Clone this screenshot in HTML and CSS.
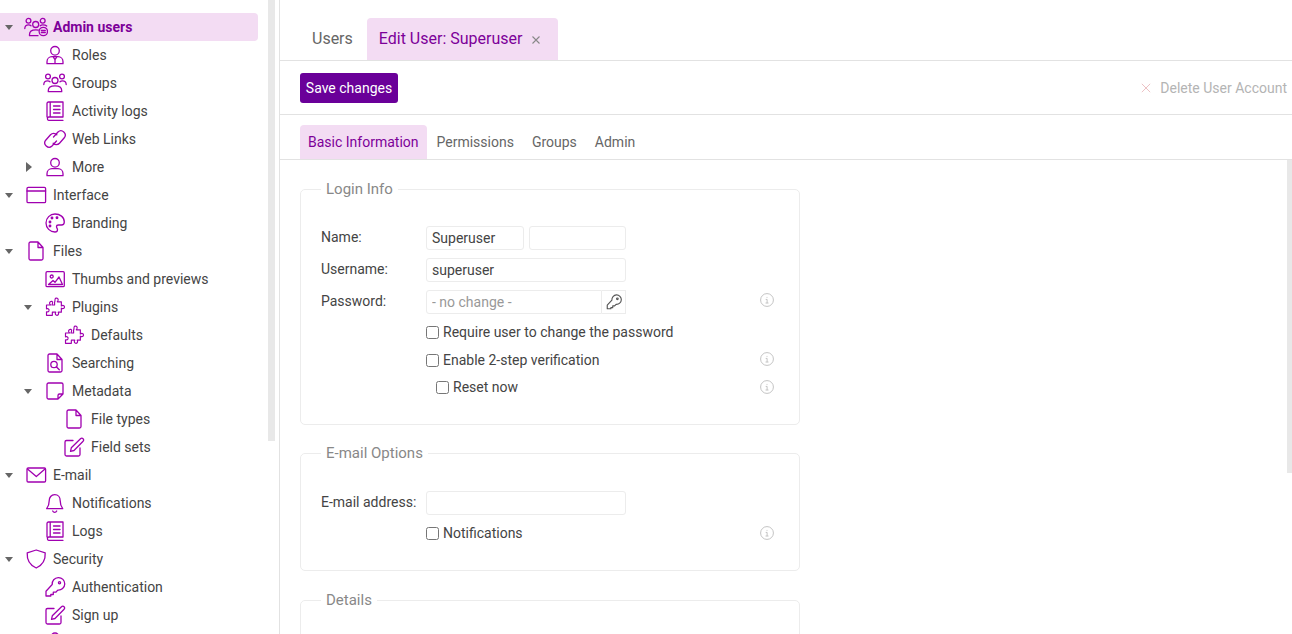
FILE: index.html
```html
<!DOCTYPE html>
<html lang="en">
<head>
<meta charset="utf-8">
<title>Edit User: Superuser</title>
<link rel="stylesheet" href="styles.css">
</head>
<body>
<svg class="defs" width="0" height="0" aria-hidden="true">
  <symbol id="i-admin" viewBox="0 0 24 24"><circle cx="4.500" cy="5.800" r="2.400"/><circle cx="18.700" cy="5.800" r="2.400"/><circle cx="11.700" cy="9.500" r="3"/><path d="M.8 13.500c0-2.300 1.500-3.700 3.700-3.700 1 0 1.900.3 2.500.9M22.700 11c-.7-.8-2.100-1.200-4-1.200-1 0-1.900.3-2.500.9M5.500 20.700v-1.200c0-2.800 2.500-4.700 6.300-4.700 1 0 1.700.1 2.500.3M5.500 20.700h8.500"/><circle cx="19.300" cy="16.500" r="4.200"/><path d="M17.300 15.500h4M17.300 17.500h4"/></symbol>
  <symbol id="i-role" viewBox="0 0 24 24"><circle cx="12" cy="7.800" r="4.300"/><path d="M4 20.700v-2c0-2.800 2.200-5 5-5h6c2.800 0 5 2.200 5 5v2zM12 20.700v-4M10 13.700l2 3 2-3"/></symbol>
  <symbol id="i-group" viewBox="0 0 24 24"><circle cx="5" cy="5.500" r="2.400"/><circle cx="19" cy="5.500" r="2.400"/><circle cx="12" cy="9.500" r="3"/><path d="M.8 13.500c0-2.300 1.500-3.700 3.700-3.700 1 0 1.900.3 2.500.9M23.200 13.500c0-2.300-1.500-3.700-3.700-3.700-1 0-1.900.3-2.500.9M5.300 20.700v-1.200c0-2.800 2.600-4.700 6.700-4.700s6.700 1.900 6.700 4.700v1.200z"/></symbol>
  <symbol id="i-book" viewBox="0 0 24 24"><path d="M4 18V4.500A1.500 1.500 0 0 1 5.500 3H20v15H5.700a1.700 1.700 0 0 0 0 3.300H20M7.200 3v15M10.500 7H17M10.500 10.500H17M10.500 14H17"/></symbol>
  <symbol id="i-link" viewBox="0 0 24 24"><path d="M10.500 10l4.500-5a4.300 4.300 0 0 1 6.300 5.800l-4.800 5.400a4.300 4.300 0 0 1-6.300 0"/><path d="M13.500 14l-4.500 5a4.300 4.300 0 0 1-6.300-5.800l4.800-5.400a4.300 4.300 0 0 1 6.300 0"/></symbol>
  <symbol id="i-user" viewBox="0 0 24 24"><circle cx="12" cy="7.800" r="4.300"/><path d="M4 20.700v-2c0-2.800 2.200-5 5-5h6c2.800 0 5 2.200 5 5v2z"/></symbol>
  <symbol id="i-window" viewBox="0 0 24 24"><rect x="3" y="4.300" width="18.600" height="15.400" rx="1.200"/><path d="M3 8h18.600"/></symbol>
  <symbol id="i-palette" viewBox="0 0 24 24"><path d="M12 3a9 9 0 0 0 0 18c1.700 0 2.500-1 2.500-2.200 0-1.400-1-1.800-1-3 0-1.100 1-1.800 2-1.800h3c1.800 0 2.800-1.200 2.800-3C21.300 6 17 3 12 3z"/><circle cx="7" cy="11" r=".8"/><circle cx="9" cy="7" r=".8"/><circle cx="14" cy="6.800" r=".8"/><circle cx="7" cy="15" r=".8"/></symbol>
  <symbol id="i-file" viewBox="0 0 24 24"><path d="M5 4.500A1.500 1.500 0 0 1 6.500 3H14l5 5.500v11a1.500 1.500 0 0 1-1.500 1.500h-11A1.500 1.500 0 0 1 5 19.500zM14 3v5.500h5"/></symbol>
  <symbol id="i-image" viewBox="0 0 24 24"><rect x="3" y="4.700" width="18.300" height="15" rx="1.200"/><circle cx="8.700" cy="9.500" r="1.500"/><path d="M5.500 17.500l4.500-4 2 1.800 4-5.300 3.500 7.500z"/></symbol>
  <symbol id="i-puzzle" viewBox="0 0 24 24"><g transform="translate(.8 1) scale(.9)"><path d="M3 10h4.500c-1-1-1.300-2-1-2.800C7 6 8 5.800 9 6c.7.300 1 1 .8 1.800-.1.700-.5 1.500-.8 2.200h3V6.500c1-.5 0-2 .5-3C13 2.300 14 2 15 2.500c1 .5 1.300 1.500.7 2.800l-.7 1.200h4.500v4.500c1-.6 2-.8 2.800-.2.900.7.900 2.200 0 2.900-.8.600-1.800.4-2.800-.2V18H16c.6 1 .7 2 .1 2.800-.7.900-2.300.9-3 0-.6-.8-.4-1.800.2-2.800H9.500v3.500H3v-4c1.200.4 2.200.1 2.700-.8.400-1 .1-2-.8-2.500-.6-.3-1.200-.2-1.900.1z"/></g></symbol>
  <symbol id="i-search" viewBox="0 0 24 24"><path d="M5 4.500A1.500 1.500 0 0 1 6.500 3H14l5 5.500v11a1.500 1.500 0 0 1-1.500 1.500h-11A1.500 1.500 0 0 1 5 19.500zM14 3v5.500h5"/><circle cx="11" cy="13.500" r="3.200"/><path d="M13.300 15.800l3 3"/></symbol>
  <symbol id="i-note" viewBox="0 0 24 24"><path d="M4 5.500A1.500 1.500 0 0 1 5.500 4h13A1.500 1.500 0 0 1 20 5.500V15l-5 5H5.500A1.500 1.500 0 0 1 4 18.500zM20 15h-3.500a1.500 1.500 0 0 0-1.500 1.500V20"/></symbol>
  <symbol id="i-edit" viewBox="0 0 24 24"><path d="M11 5.500H4.500A1.500 1.500 0 0 0 3 7v12.500A1.500 1.500 0 0 0 4.500 21h12a1.500 1.500 0 0 0 1.500-1.500V13"/><path d="M18.500 3.700a1.800 1.800 0 0 1 2.600 2.600L12 15.500l-3.500.8.800-3.500z"/></symbol>
  <symbol id="i-mail" viewBox="0 0 24 24"><rect x="3" y="5" width="18.600" height="14" rx="1.200"/><path d="M3.500 6l8.800 7.500L21 6"/></symbol>
  <symbol id="i-bell" viewBox="0 0 24 24"><path d="M11.700 3.700c-3.500 0-5.500 2.800-5.500 6 0 4-1 6-2.500 8h16c-1.500-2-2.500-4-2.500-8 0-3.200-2-6-5.500-6zM9.700 20c.4.800 1.100 1.300 2 1.300s1.600-.5 2-1.300"/></symbol>
  <symbol id="i-shield" viewBox="0 0 24 24"><path d="M12.200 3l9 2.800c.4 7-2.300 12.300-9 15.200-6.700-2.900-9.400-8.200-9-15.200z"/></symbol>
  <symbol id="i-key" viewBox="0 0 24 24"><path d="M9.200 9.500a6.300 6.300 0 1 1 5.600 5.600l-2 2.100h-2.500v2.300H7.800V21H3v-4.800z"/><circle cx="16.500" cy="7.800" r="1.100"/></symbol>
  <symbol id="i-more" viewBox="0 0 24 24"><circle cx="12" cy="6" r="4"/></symbol>
  <symbol id="i-info" viewBox="0 0 24 24"><circle cx="12" cy="12" r="11"/><path d="M12 6.800v1.400M9.800 11h2.400v6M9.500 17.200h5"/></symbol>
</svg>

<div class="app">
  <nav class="sidebar">
    <ul class="tree">
      <li class="node lv0 active"><span class="caret down"></span><svg class="ico"><use href="#i-admin"/></svg><span>Admin users</span></li>
      <li class="node lv1"><span class="caret"></span><svg class="ico"><use href="#i-role"/></svg><span>Roles</span></li>
      <li class="node lv1"><span class="caret"></span><svg class="ico"><use href="#i-group"/></svg><span>Groups</span></li>
      <li class="node lv1"><span class="caret"></span><svg class="ico"><use href="#i-book"/></svg><span>Activity logs</span></li>
      <li class="node lv1"><span class="caret"></span><svg class="ico"><use href="#i-link"/></svg><span>Web Links</span></li>
      <li class="node lv1"><span class="caret right"></span><svg class="ico"><use href="#i-user"/></svg><span>More</span></li>
      <li class="node lv0"><span class="caret down"></span><svg class="ico"><use href="#i-window"/></svg><span>Interface</span></li>
      <li class="node lv1"><span class="caret"></span><svg class="ico"><use href="#i-palette"/></svg><span>Branding</span></li>
      <li class="node lv0"><span class="caret down"></span><svg class="ico"><use href="#i-file"/></svg><span>Files</span></li>
      <li class="node lv1"><span class="caret"></span><svg class="ico"><use href="#i-image"/></svg><span>Thumbs and previews</span></li>
      <li class="node lv1"><span class="caret down"></span><svg class="ico"><use href="#i-puzzle"/></svg><span>Plugins</span></li>
      <li class="node lv2"><span class="caret"></span><svg class="ico"><use href="#i-puzzle"/></svg><span>Defaults</span></li>
      <li class="node lv1"><span class="caret"></span><svg class="ico"><use href="#i-search"/></svg><span>Searching</span></li>
      <li class="node lv1"><span class="caret down"></span><svg class="ico"><use href="#i-note"/></svg><span>Metadata</span></li>
      <li class="node lv2"><span class="caret"></span><svg class="ico"><use href="#i-file"/></svg><span>File types</span></li>
      <li class="node lv2"><span class="caret"></span><svg class="ico"><use href="#i-edit"/></svg><span>Field sets</span></li>
      <li class="node lv0"><span class="caret down"></span><svg class="ico"><use href="#i-mail"/></svg><span>E-mail</span></li>
      <li class="node lv1"><span class="caret"></span><svg class="ico"><use href="#i-bell"/></svg><span>Notifications</span></li>
      <li class="node lv1"><span class="caret"></span><svg class="ico"><use href="#i-book"/></svg><span>Logs</span></li>
      <li class="node lv0"><span class="caret down"></span><svg class="ico"><use href="#i-shield"/></svg><span>Security</span></li>
      <li class="node lv1"><span class="caret"></span><svg class="ico"><use href="#i-key"/></svg><span>Authentication</span></li>
      <li class="node lv1"><span class="caret"></span><svg class="ico"><use href="#i-edit"/></svg><span>Sign up</span></li>
      <li class="node lv1"><span class="caret"></span><svg class="ico"><use href="#i-more"/></svg></li>
    </ul>
    <div class="scroll-side"></div>
  </nav>

  <main class="main">
    <div class="tabs">
      <div class="tab">Users</div>
      <div class="tab tab-on">Edit User: Superuser<svg class="tab-x" viewBox="0 0 8 8"><path d="M.5.500l7 7M7.500.500l-7 7"/></svg></div>
    </div>
    <div class="toolbar">
      <button class="btn-save" type="button">Save changes</button>
      <div class="delete"><svg class="delete-x" viewBox="0 0 12 12"><path d="M1 1l10 10M11 1L1 11"/></svg>Delete User Account</div>
    </div>
    <div class="subtabs">
      <div class="subtab subtab-on">Basic Information</div>
      <div class="subtab">Permissions</div>
      <div class="subtab">Groups</div>
      <div class="subtab">Admin</div>
    </div>
    <div class="content">
      <fieldset class="box box-login">
        <legend>Login Info</legend>
        <div class="row row-input">
          <label class="lbl">Name:</label>
          <div class="fields"><input class="inp half" value="Superuser"><input class="inp half" value=""></div>
        </div>
        <div class="row row-input">
          <label class="lbl">Username:</label>
          <div class="fields"><input class="inp full" value="superuser"></div>
        </div>
        <div class="row row-input">
          <label class="lbl">Password:</label>
          <div class="fields pw"><input class="inp pw-in" placeholder="- no change -"><span class="pw-btn"><svg class="key"><use href="#i-key"/></svg></span></div>
          <svg class="info"><use href="#i-info"/></svg>
        </div>
        <div class="row row-check r1">
          <span class="lbl"></span>
          <label class="chk"><input type="checkbox">Require user to change the password</label>
        </div>
        <div class="row row-check r2">
          <span class="lbl"></span>
          <label class="chk"><input type="checkbox">Enable 2-step verification</label>
          <svg class="info info-up"><use href="#i-info"/></svg>
        </div>
        <div class="row row-check r3">
          <span class="lbl"></span>
          <label class="chk chk-in"><input type="checkbox">Reset now</label>
          <svg class="info"><use href="#i-info"/></svg>
        </div>
      </fieldset>
      <fieldset class="box box-mail">
        <legend>E-mail Options</legend>
        <div class="row row-input">
          <label class="lbl">E-mail address:</label>
          <div class="fields"><input class="inp full" value=""></div>
        </div>
        <div class="row row-check r4">
          <span class="lbl"></span>
          <label class="chk"><input type="checkbox">Notifications</label>
          <svg class="info"><use href="#i-info"/></svg>
        </div>
      </fieldset>
      <fieldset class="box box-details">
        <legend>Details</legend>
      </fieldset>
      <div class="scroll-main"></div>
    </div>
  </main>
</div>
</body>
</html>
```
FILE: styles.css
```css
* { box-sizing: border-box; }
html, body { margin: 0; height: 100%; overflow: hidden; }
body { font-family: Roboto, "Liberation Sans", sans-serif; font-size: 14px; color: #444; background: #fff; }
.defs { position: absolute; }
.app { display: flex; height: 634px; }

.sidebar { position: relative; flex: 0 0 280px; height: 634px; overflow: hidden; border-right: 1px solid #e2e2e2; }
.tree { list-style: none; margin: 0; padding: 13px 0 0; width: 258px; }
.node { display: flex; align-items: center; height: 28px; white-space: nowrap; }
.lv0 { padding-left: 5px; }
.lv1 { padding-left: 24px; }
.lv2 { padding-left: 43px; }
.active { background: #f3dcf3; border-radius: 0 4px 4px 0; color: #7d0099; font-weight: 700; }
.caret { flex: 0 0 9px; height: 10px; margin-right: 10px; position: relative; }
.caret.down::before { content: ""; position: absolute; left: 0; top: 3px; border-left: 4.5px solid transparent; border-right: 4.5px solid transparent; border-top: 5px solid #666; }
.caret.right::before { content: ""; position: absolute; left: 2px; top: 0; border-top: 5px solid transparent; border-bottom: 5px solid transparent; border-left: 6px solid #666; }
.ico { flex: 0 0 24px; width: 24px; height: 24px; margin-right: 5px; fill: none; stroke: #a000b0; stroke-width: 1.3; stroke-linejoin: round; stroke-linecap: round; overflow: visible; }
.scroll-side { position: absolute; left: 268px; top: 0; width: 7px; height: 441px; background: #e8e8e8; }

.main { flex: 1; min-width: 0; display: flex; flex-direction: column; height: 634px; }
.tabs { display: flex; align-items: flex-end; height: 61px; padding-left: 20px; border-bottom: 1px solid #e2e2e2; flex: none; }
.tab { height: 42px; line-height: 41px; padding: 0 12px; font-size: 16px; color: #666; }
.tab + .tab { margin-left: 2px; padding-right: 18px; }
.tab-on { background: #f3dcf3; color: #7d0099; border-radius: 4px 4px 0 0; }
.tab-x { display: inline-block; width: 8px; height: 8px; margin-left: 10px; fill: none; stroke: #888; stroke-width: 1.1; }
.toolbar { display: flex; align-items: center; justify-content: space-between; height: 54px; padding: 0 5px 0 20px; border-bottom: 1px solid #e2e2e2; flex: none; }
.btn-save { height: 30px; width: 98px; padding: 1px 0 0; border: 0; border-radius: 3px; background: #6a0099; color: #fff; font: 14px Roboto, "Liberation Sans", sans-serif; }
.delete { display: flex; align-items: center; padding-top: 1px; color: #b4b4b4; font-size: 14px; }
.delete-x { width: 10px; height: 10px; margin-right: 9px; fill: none; stroke: #e8b4b8; stroke-width: 1; }
.subtabs { display: flex; align-items: flex-end; height: 45px; padding-left: 20px; border-bottom: 1px solid #e2e2e2; flex: none; }
.subtab { height: 34px; line-height: 35px; padding: 0 8px; margin-right: 2px; color: #666; font-size: 14px; }
.subtab-on { background: #f3dcf3; color: #7d0099; border-radius: 4px 4px 0 0; }
.content { position: relative; flex: 1; padding: 20px 0 0 20px; overflow: hidden; }
.scroll-main { position: absolute; right: 0; top: 0; width: 5px; height: 313px; background: #e8e8e8; }

.box { position: relative; width: 500px; margin: 0 0 19px; padding: 0 20px; border: 1px solid #ececec; border-radius: 5px; }
.box legend { padding: 0 5px; font-size: 15px; line-height: 18px; color: #888; }
.box-login { height: 245px; padding-top: 28px; }
.box-mail { height: 127px; padding-top: 29px; margin-bottom: 20px; }
.box-details { height: 80px; margin-bottom: 0; }
.row { display: flex; align-items: center; color: #444; }
.row-input { height: 24px; margin-bottom: 8px; }
.row-check { height: 20px; }
.lbl { flex: 0 0 105px; margin-top: -2px; }
.fields { display: flex; gap: 5px; }
.inp { height: 24px; padding: 0 5px; border: 1px solid #ececec; border-radius: 3px; background: #fff; font: 14px Roboto, "Liberation Sans", sans-serif; color: #444; outline: 0; }
.inp::placeholder { color: #999; opacity: 1; }
.half { width: 98px; }
.half + .half { width: 97px; }
.full { width: 200px; }
.pw { gap: 0; width: 200px; }
.pw-in { width: 176px; border-radius: 3px 0 0 3px; }
.pw-btn { display: flex; align-items: center; justify-content: center; width: 24px; height: 24px; border: 1px solid #ececec; border-left: 0; }
.key { width: 18px; height: 18px; fill: none; stroke: #555; stroke-width: 1.5; stroke-linejoin: round; }
.info { width: 14px; height: 14px; margin-left: auto; margin-right: 5px; margin-top: -4px; fill: none; stroke: #bbb; stroke-width: 1.5; }
.row-check .info { margin-top: 0; }
.row-check .info-up { margin-top: -2px; }
.chk { display: flex; align-items: center; }
.chk input { width: 13px; height: 13px; margin: 0 4px 0 0; }
.chk-in { margin-left: 10px; }
.r1 { margin-top: 8px; margin-bottom: 8px; }
.r2 { margin-bottom: 7px; }
.r4 { margin-top: 8px; }
```
